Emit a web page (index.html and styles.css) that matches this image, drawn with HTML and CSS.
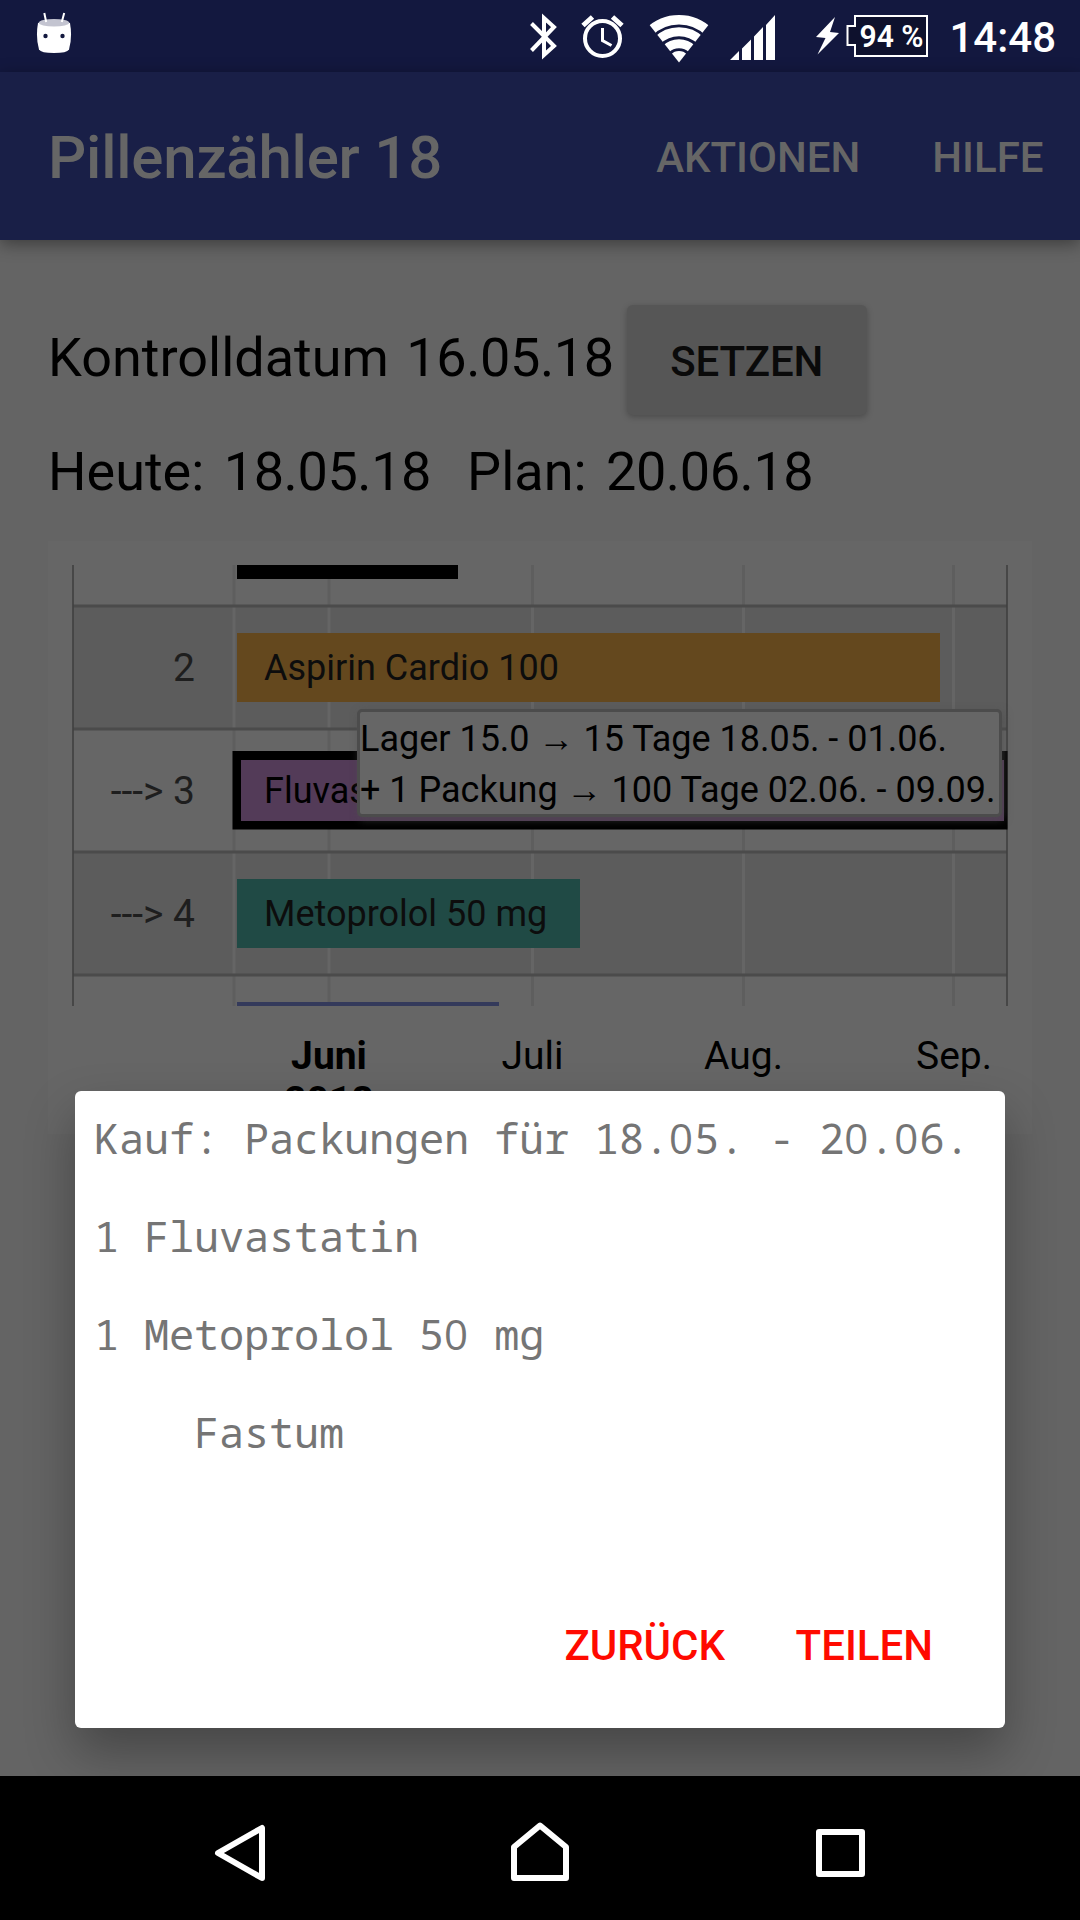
FILE: index.html
```html
<!DOCTYPE html>
<html lang="de">
<head>
<meta charset="utf-8">
<title>Pillenzähler 18</title>
<link rel="stylesheet" href="styles.css">
</head>
<body>
<div class="screen">
  <header class="status">
    <svg class="status-icon" width="36" height="44" viewBox="36 12 36 44">
      <path d="M38 23 Q54 17 70 23 Q72.500 37 69 49.500 Q67 53 54 53 Q41 53 39 49.500 Q35.500 37 38 23Z" fill="#fff"/>
      <ellipse cx="54" cy="22.700" rx="15.200" ry="3.800" fill="#c3c4d0"/>
      <path d="M44.300 13 L46.200 22 M64.200 13 L61.800 22" stroke="#fff" stroke-width="2"/>
      <circle cx="45.500" cy="36" r="2.200" fill="#13183f"/><circle cx="62.500" cy="36" r="2.200" fill="#13183f"/>
    </svg>
    <svg class="status-tray" width="400" height="60" viewBox="528 6 400 60">
      <path d="M531.500 23.500 L554 46 L544 55 V18 L554 27 L531.500 50.500" fill="none" stroke="#fff" stroke-width="4"/>
      <circle cx="602.500" cy="38.500" r="17.500" fill="none" stroke="#fff" stroke-width="4"/>
      <path d="M602.500 28 V40.500 L611.500 45.500" fill="none" stroke="#fff" stroke-width="3"/>
      <path d="M583 25.500 L592.500 17 M612.500 17 L622 25.500" stroke="#fff" stroke-width="5"/>
      <clipPath id="fan"><path d="M679 62.500 L641.500 14.700 V0 H716.500 V14.700Z"/></clipPath>
      <g clip-path="url(#fan)" fill="none" stroke="#fff">
        <circle cx="679" cy="62.500" r="42.700" stroke-width="9.400"/>
        <circle cx="679" cy="62.500" r="30.800" stroke-width="9"/>
        <circle cx="679" cy="62.500" r="18.800" stroke-width="9"/>
        <circle cx="679" cy="62.500" r="5.700" stroke-width="11.400"/>
      </g>
      <path d="M730 60 L739 51 V60Z M742 60 V48.500 L751 39.500 V60Z M754 60 V36.500 L763 27 V60Z M766 60 V25 L775 15 V60Z" fill="#fff"/>
      <path d="M835 17 L816 37 L825.500 38 L817.500 54.500 L839 33 L830 32Z" fill="#fff"/>
      <path d="M855 16 H927 V56 H855 V45 H847.500 V26 H855Z" fill="#0e112d" stroke="#fff" stroke-width="2"/>
      <text class="battery" x="859.500" y="46.500" textLength="64" lengthAdjust="spacingAndGlyphs">94 %</text>
    </svg>
    <span class="clock">14:48</span>
  </header>
  <nav class="toolbar">
    <h1 class="title">Pillenzähler 18</h1>
    <span class="menu">AKTIONEN</span>
    <span class="menu">HILFE</span>
  </nav>
  <main class="content">
    <div class="row check"><span>Kontrolldatum <span class="num">16.05.18</span></span><button class="set">SETZEN</button></div>
    <div class="row dates"><span>Heute: <span class="num wide">18.05.18</span></span><span>Plan: <span class="num wide">20.06.18</span></span></div>
    <section class="card">
      <svg class="chart" width="984" height="593" viewBox="48 541 984 593">
        <path d="M73 606 H1007 V729 H73Z M73 852 H1007 V975 H73Z" fill="#5c5c5c"/>
        <path d="M234 565 V606 M329 565 V606 M532.500 565 V606 M743.500 565 V606 M953.500 565 V606 M234 729 V852 M329 729 V852 M532.500 729 V852 M743.500 729 V852 M953.500 729 V852 M234 975 V1006 M329 975 V1006 M532.500 975 V1006 M743.500 975 V1006 M953.500 975 V1006" stroke="#5e5e5e" stroke-width="3"/>
        <path d="M234 606 V729 M329 606 V729 M532.500 606 V729 M743.500 606 V729 M953.500 606 V729 M234 852 V975 M329 852 V975 M532.500 852 V975 M743.500 852 V975 M953.500 852 V975" stroke="#656565" stroke-width="3"/>
        <path d="M73 606 H1007 M73 729 H1007 M73 852 H1007 M73 975 H1007" stroke="#4b4b4b" stroke-width="3"/>
        <path d="M73 565 V1006 M1007 565 V1006" stroke="#404040" stroke-width="1.600"/>
        <rect x="237" y="565" width="221" height="14" fill="#000"/>
        <rect x="237" y="633" width="703" height="69" fill="#64481e"/>
        <rect x="232.500" y="751" width="775" height="78.500" fill="#000"/>
        <rect x="241" y="760" width="763" height="61" fill="#533b58"/>
        <rect x="237" y="879" width="343" height="69" fill="#204a45"/>
        <rect x="237" y="1002" width="262" height="4" fill="#343a5b"/>
        <g class="bar-label">
          <text x="264" y="680">Aspirin Cardio 100</text>
          <text x="264" y="803" fill="#000">Fluvastatin</text>
          <text x="264" y="926">Metoprolol 50 mg</text>
        </g>
        <g class="row-label">
          <text x="195" y="681">2</text><text x="195" y="804">---&gt; 3</text><text x="195" y="927">---&gt; 4</text>
        </g>
        <g class="axis">
          <text class="strong" x="329" y="1069">Juni</text><text class="strong" x="329" y="1114">2018</text>
          <text x="532.500" y="1069">Juli</text><text x="743.500" y="1069">Aug.</text><text x="954" y="1069">Sep.</text>
        </g>
      </svg>
      <div class="tip"><span>Lager 15.0 → 15 Tage 18.05. - 01.06.</span><span>+ 1 Packung → 100 Tage 02.06. - 09.09.</span></div>
    </section>
  </main>
  <div class="dialog">
    <pre class="list">Kauf: Packungen für 18.<i>0</i>5. - 2<i>0</i>.<i>0</i>6.

1 Fluvastatin

1 Metoprolol 5<i>0</i> mg

    Fastum</pre>
    <div class="actions"><span>ZURÜCK</span><span>TEILEN</span></div>
  </div>
  <footer class="nav">
    <svg width="60" height="64" viewBox="210 1821 60 64"><path d="M262 1828 V1878 L218 1853Z"/></svg>
    <svg width="66" height="64" viewBox="508 1821 66 64"><path d="M514 1878 V1847 L540 1825.500 L566 1847 V1878Z"/></svg>
    <svg width="56" height="64" viewBox="812 1821 56 64"><path d="M819 1832 H862 V1874 H819Z"/></svg>
  </footer>
</div>
</body>
</html>
```
FILE: styles.css
```css
* { box-sizing: border-box; }
body { margin: 0; font-family: Roboto, "Liberation Sans", sans-serif; background: #646464; }
.screen { position: relative; width: 1080px; height: 1920px; overflow: hidden; display: flex; flex-direction: column; }
.status { height: 72px; background: #13183f; display: flex; align-items: flex-start; padding: 0 24px 0 36px; color: #fff; }
.status-icon { margin-top: 12px; }
.status-tray { margin: 6px 0 0 auto; }
.battery { font: 600 31px Roboto, sans-serif; fill: #fff; }
.clock { font-weight: 500; font-size: 42px; line-height: 50px; margin: 13px 0 0 21px; }
.toolbar { height: 168px; background: #191f47; color: #666; display: flex; align-items: center; padding: 3px 36.5px 0 48px; position: relative; box-shadow: 0 4px 16px rgba(0,0,0,.4); }
.title { margin: 0 auto 0 0; font-weight: 500; font-size: 60px; line-height: 70px; letter-spacing: -.22px; }
.menu { font-weight: 500; font-size: 42px; margin-left: 72px; }
.content { flex: 1; padding: 62px 48px 0; color: #000; font-size: 54px; }
.row { display: flex; align-items: flex-start; white-space: pre; }
.check { height: 133px; line-height: 111px; }
.dates { height: 106px; line-height: 73px; gap: 36px; }
.num { letter-spacing: -.4px; margin-left: 4px; }
.num.wide { margin-left: 6px; }
.set { margin: 3px 0 0 13px; width: 240px; height: 110px; border: 0; border-radius: 6px; background: #565656; color: #0a0a0a; font: 500 42px/106px Roboto, sans-serif; letter-spacing: -.2px; padding: 4px 0 0; box-shadow: 0 2px 6px rgba(0,0,0,.25); }
.card { position: relative; height: 593px; background: #666; }
.chart { display: block; }
.chart text { font-family: Roboto, sans-serif; }
.bar-label { font-size: 36px; fill: #0d0d0d; }
.row-label { font-size: 39px; fill: #1e1e1e; text-anchor: end; }
.axis { font-size: 39px; fill: #000; text-anchor: middle; }
.strong { font-weight: 700; }
.tip { position: absolute; left: 309px; top: 168px; width: 645px; height: 108px; border: 3px solid #4c4c4c; border-radius: 5px; background: #666; font-size: 36px; line-height: 51px; padding-top: 2px; display: flex; flex-direction: column; align-items: flex-start; white-space: nowrap; box-shadow: 2px 3px 8px rgba(76,76,76,.6); }
.dialog { position: absolute; left: 75px; top: 1091px; width: 930px; height: 637px; background: #fff; border-radius: 6px; padding: 22px 19px; box-shadow: 0 24px 50px rgba(0,0,0,.3); display: flex; flex-direction: column; }
.list { margin: 0; font: 42px/49px "Noto Sans Mono", "DejaVu Sans Mono", monospace; letter-spacing: -.2px; color: #757575; }
.list i { font-family: "Open Sans", "Noto Sans", sans-serif; font-style: normal; letter-spacing: 1.1px; line-height: 1; }
.actions { margin-top: auto; display: flex; justify-content: flex-end; gap: 70.5px; padding: 0 53px 36px 0; font-size: 42px; font-weight: 500; color: #ff0a00; }
.nav { position: absolute; left: 0; right: 0; bottom: 0; height: 144px; background: #000; display: flex; justify-content: space-between; align-items: flex-start; padding: 45px 212px 0 210px; }
.nav path { fill: none; stroke: #fff; stroke-width: 6; stroke-linejoin: round; }
```
